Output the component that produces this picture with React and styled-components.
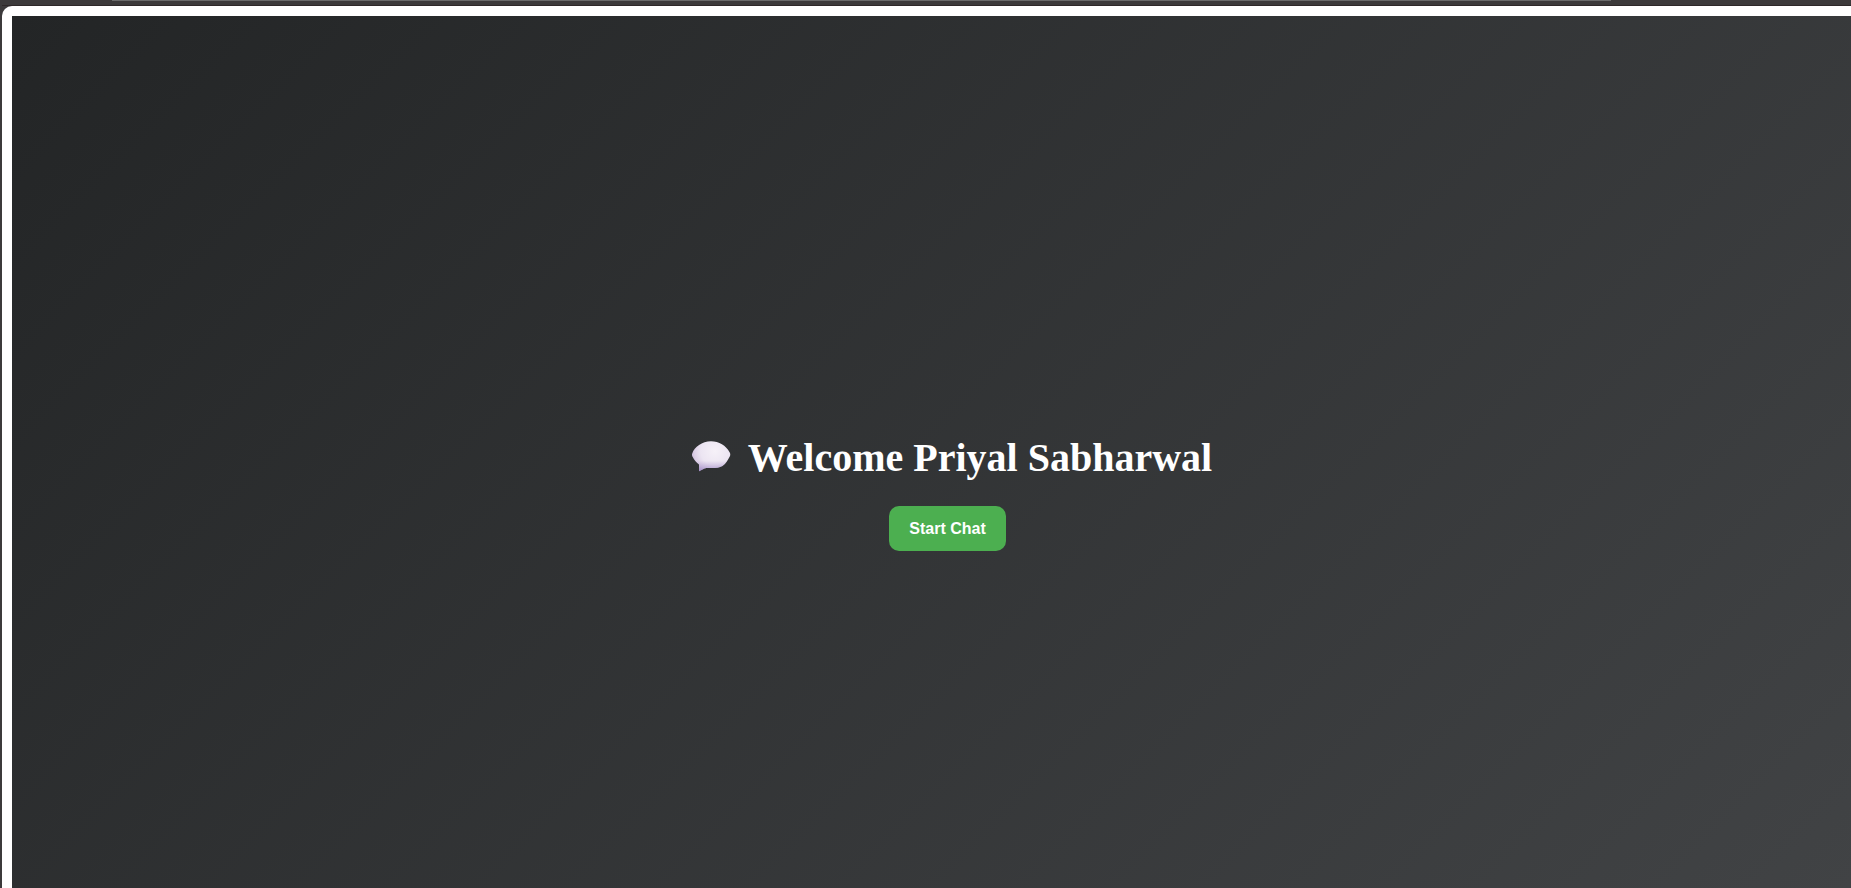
import React from "react";
import styled, { createGlobalStyle } from "styled-components";

const GlobalStyle = createGlobalStyle`
  *, *::before, *::after { box-sizing: border-box; }
  body { margin: 0; background: #3c3a3b; }
`;

const Shell = styled.div`
  display: flex;
  flex-direction: column;
  height: 100vh;
  padding-left: 2px;
  overflow: hidden;
  background: #3c3a3b;
`;

const TopBar = styled.div`
  flex: none;
  height: 6px;
  padding: 0 240px 0 110px;
  border-bottom: 1px solid #2e2829;
`;

const TopBarEdge = styled.div`
  height: 1px;
  background: #6b6b6b;
`;

const Page = styled.div`
  flex: 1;
  display: flex;
  padding: 10px 0 0 10px;
  border-top-left-radius: 10px;
  background: #ffffff;
`;

const Welcome = styled.main`
  flex: 1;
  display: flex;
  flex-direction: column;
  align-items: center;
  justify-content: center;
  gap: 25px;
  padding: 82px 0 0 32px;
  background: linear-gradient(135deg, #232526, #414345);
`;

const Title = styled.h1`
  display: flex;
  align-items: center;
  gap: 10px;
  margin: 0;
  color: #ffffff;
  font-family: "Liberation Serif", "Times New Roman", serif;
  font-size: 40px;
  font-weight: 700;
  line-height: 46px;
`;

const BubbleIcon = styled.svg`
  flex: none;
  width: 55px;
  height: 46px;
`;

const StartButton = styled.button`
  height: 45px;
  padding: 0 20px;
  border: 0;
  border-radius: 10px;
  background: #4caf50;
  color: #ffffff;
  font-family: "Liberation Sans", Arial, sans-serif;
  font-size: 16px;
  font-weight: 700;
  cursor: pointer;
`;

function SpeechBubble() {
  return (
    <BubbleIcon viewBox="0 0 55 46" aria-hidden="true">
      <defs>
        <radialGradient id="bubbleFill" gradientUnits="userSpaceOnUse" cx="32" cy="16" r="26">
          <stop offset="0" stopColor="#f6f1f8" />
          <stop offset="0.55" stopColor="#ece5f2" />
          <stop offset="0.8" stopColor="#dccfe6" />
          <stop offset="1" stopColor="#bba9d2" />
        </radialGradient>
        <linearGradient id="bubbleShade" x1="0" y1="0" x2="0" y2="1">
          <stop offset="0.65" stopColor="#a993cb" stopOpacity="0" />
          <stop offset="1" stopColor="#9a85c4" stopOpacity="0.75" />
        </linearGradient>
      </defs>
      {["url(#bubbleFill)", "url(#bubbleShade)"].map((fill) => (
        <path
          key={fill}
          fill={fill}
          d="M28 6.3C19 6.3 11.5 12 9.2 18.4C8.8 19.6 9 20.8 9.7 21.9C11 24.8 13.2 27.2 16 29.4V36.3L21.5 33.6C24 32.8 26 33.1 29 33.1C33 33.1 36.5 32.6 39.5 31C43 29 45.2 24.5 46.9 21.3C47.5 20 47.4 18.6 46.6 17.3C43 10.5 36 6.3 28 6.3Z"
        />
      ))}
    </BubbleIcon>
  );
}

export default function App() {
  return (
    <Shell>
      <GlobalStyle />
      <TopBar>
        <TopBarEdge />
      </TopBar>
      <Page>
        <Welcome>
          <Title>
            <SpeechBubble />
            Welcome Priyal Sabharwal
          </Title>
          <StartButton type="button">Start Chat</StartButton>
        </Welcome>
      </Page>
    </Shell>
  );
}
